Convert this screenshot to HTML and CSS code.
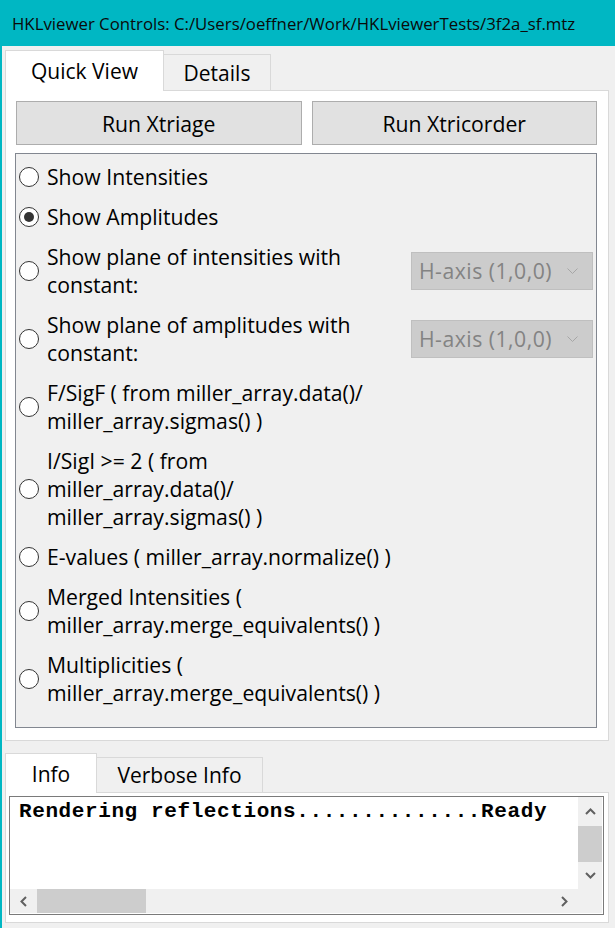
FILE: index.html
```html
<!DOCTYPE html>
<html>
<head>
<meta charset="utf-8">
<title>HKLviewer Controls</title>
<link rel="stylesheet" href="styles.css">
</head>
<body>
<div class="window">
  <div class="titlebar">HKLviewer Controls: C:/Users/oeffner/Work/HKLviewerTests/3f2a_sf.mtz</div>
  <div class="client">
    <div class="tabs top-tabs">
      <div class="tab active qv">Quick View</div>
      <div class="tab det">Details</div>
    </div>
    <div class="pane main-pane">
      <div class="buttons">
        <button class="btn">Run Xtriage</button>
        <button class="btn">Run Xtricorder</button>
      </div>
      <div class="frame">
        <div class="row"><span class="radio"></span><span class="label">Show Intensities</span></div>
        <div class="row"><span class="radio checked"></span><span class="label">Show Amplitudes</span></div>
        <div class="row"><span class="radio"></span><span class="label">Show plane of intensities with<br>constant:</span>
          <div class="combo"><span>H-axis (1,0,0)</span><svg class="chev" width="11" height="7" viewBox="0 0 11 7"><polyline points="0.5,0.5 5.5,5.5 10.5,0.5" fill="none" stroke="#a6a6a6" stroke-width="1"/></svg></div></div>
        <div class="row"><span class="radio"></span><span class="label">Show plane of amplitudes with<br>constant:</span>
          <div class="combo"><span>H-axis (1,0,0)</span><svg class="chev" width="11" height="7" viewBox="0 0 11 7"><polyline points="0.5,0.5 5.5,5.5 10.5,0.5" fill="none" stroke="#a6a6a6" stroke-width="1"/></svg></div></div>
        <div class="row"><span class="radio"></span><span class="label">F/SigF ( from miller_array.data()/<br>miller_array.sigmas() )</span></div>
        <div class="row"><span class="radio"></span><span class="label">I/SigI &gt;= 2 ( from<br>miller_array.data()/<br>miller_array.sigmas() )</span></div>
        <div class="row"><span class="radio"></span><span class="label">E-values ( miller_array.normalize() )</span></div>
        <div class="row"><span class="radio"></span><span class="label">Merged Intensities (<br>miller_array.merge_equivalents() )</span></div>
        <div class="row"><span class="radio"></span><span class="label">Multiplicities (<br>miller_array.merge_equivalents() )</span></div>
      </div>
    </div>
    <div class="tabs bottom-tabs">
      <div class="tab active info">Info</div>
      <div class="tab verbose">Verbose Info</div>
    </div>
    <div class="pane info-pane">
      <div class="textedit">
        <div class="text-area">Rendering reflections..............Ready</div>
        <div class="vscroll">
          <div class="sbtn up"><svg width="11" height="7" viewBox="0 0 11 7"><polyline points="1,6 5.5,1.5 10,6" fill="none" stroke="#606060" stroke-width="2"/></svg></div>
          <div class="vthumb"></div>
          <div class="sbtn down"><svg width="11" height="7" viewBox="0 0 11 7"><polyline points="1,1 5.5,5.5 10,1" fill="none" stroke="#606060" stroke-width="2"/></svg></div>
        </div>
        <div class="hscroll">
          <div class="sbtn left"><svg width="7" height="11" viewBox="0 0 7 11"><polyline points="6,1 1.5,5.5 6,10" fill="none" stroke="#606060" stroke-width="2"/></svg></div>
          <div class="hthumb"></div>
          <div class="hspace"></div>
          <div class="sbtn right"><svg width="7" height="11" viewBox="0 0 7 11"><polyline points="1,1 5.5,5.5 1,10" fill="none" stroke="#606060" stroke-width="2"/></svg></div>
        </div>
        <div class="corner"></div>
      </div>
    </div>
  </div>
</div>
</body>
</html>
```
FILE: styles.css
```css
* { box-sizing: border-box; margin: 0; padding: 0; }
html, body { width: 615px; height: 928px; overflow: hidden; }
body {
  background: #f0f0f0;
  font-family: "Open Sans", "Noto Sans", sans-serif;
  color: #000;
}
.window {
  width: 615px;
  height: 928px;
  border-left: 2px solid #00b7c3;
  display: flex;
  flex-direction: column;
}
.titlebar {
  height: 46px;
  flex: none;
  background: #00b7c3;
  padding-left: 10px;
  font-size: 16.8px;
  line-height: 48px;
  white-space: nowrap;
  color: #0a0a0a;
}
.client {
  flex: 1;
  padding: 4px 6px 0 3px;
  display: flex;
  flex-direction: column;
}
.tabs {
  display: flex;
  align-items: flex-end;
  position: relative;
  z-index: 1;
  flex: none;
}
.top-tabs { height: 40px; }
.bottom-tabs { height: 39px; margin-top: 12px; }
.tab {
  font-size: 21px;
  display: flex;
  align-items: center;
  justify-content: center;
  border: 1px solid #d9d9d9;
  border-bottom: none;
  background: #f0f0f0;
  white-space: nowrap;
}
.tab.active {
  background: #fff;
  margin-bottom: -1px;
}
.top-tabs .qv { width: 159px; height: 41px; }
.top-tabs .det { width: 107px; height: 36px; border-left: none; }
.bottom-tabs .info { width: 92px; height: 40px; }
.bottom-tabs .verbose { width: 166px; height: 35px; border-left: none; }

.pane {
  border: 1px solid #d9d9d9;
  background: #fff;
  flex: none;
}
.main-pane {
  height: 651px;
  padding: 10px 11px 12px 9px;
  display: flex;
  flex-direction: column;
  gap: 8px;
}
.buttons {
  display: flex;
  gap: 10px;
  padding-left: 1px;
  height: 44px;
  flex: none;
}
.btn {
  flex: 1;
  font-family: inherit;
  font-size: 21.2px;
  background: #e1e1e1;
  border: 1px solid #adadad;
  color: #000;
}
.frame {
  height: 575px;
  flex: none;
  border: 1px solid #828790;
  background: #f0f0f0;
  padding: 9px 3px 0 3px;
  display: flex;
  flex-direction: column;
  gap: 12px;
}
.row {
  display: flex;
  align-items: center;
  gap: 8px;
  font-size: 21.2px;
  line-height: 28px;
}
.radio {
  width: 20px;
  height: 20px;
  flex: none;
  border: 1px solid #333;
  border-radius: 50%;
  background: #fff;
  display: flex;
  align-items: center;
  justify-content: center;
}
.radio.checked::after {
  content: "";
  width: 10px;
  height: 10px;
  border-radius: 50%;
  background: #333;
}
.label { flex: 1; white-space: nowrap; }
.combo {
  width: 182px;
  height: 38px;
  flex: none;
  background: #cccccc;
  border: 1px solid #bfbfbf;
  color: #838383;
  display: flex;
  align-items: center;
  justify-content: space-between;
  padding: 0 14px 0 7px;
  white-space: nowrap;
  letter-spacing: 0.5px;
}

.info-pane {
  height: 131px;
  padding: 3px 4px 7px 3px;
}
.textedit {
  height: 119px;
  border: 1px solid #7a7a7a;
  background: #fff;
  padding: 0 1px 1px 0;
  display: grid;
  grid-template-columns: 1fr 24px;
  grid-template-rows: 1fr 24px;
}
.text-area {
  font-family: "Liberation Mono", "Courier New", monospace;
  font-weight: bold;
  font-size: 21px;
  letter-spacing: 0.6px;
  line-height: 26px;
  padding: 2px 0 0 9px;
  white-space: nowrap;
  overflow: hidden;
}
.vscroll {
  background: #f0f0f0;
  display: flex;
  flex-direction: column;
}
.sbtn {
  display: flex;
  align-items: center;
  justify-content: center;
  flex: none;
}
.vscroll .up { height: 29px; }
.vthumb { height: 36px; background: #cdcdcd; flex: none; }
.vscroll .down { flex: 1; }
.hscroll {
  background: #f0f0f0;
  display: flex;
}
.hscroll .sbtn { width: 27px; }
.hthumb { width: 109px; background: #cdcdcd; flex: none; }
.hspace { flex: 1; }
.corner { background: #f0f0f0; }
```
